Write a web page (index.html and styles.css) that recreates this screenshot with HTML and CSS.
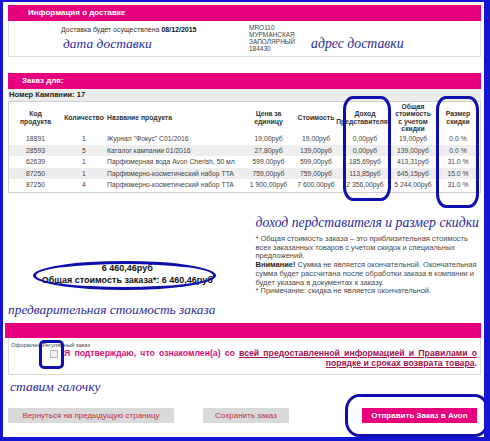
FILE: index.html
```html
<!DOCTYPE html>
<html lang="ru">
<head>
<meta charset="utf-8">
<title>Заказ</title>
<link rel="stylesheet" href="styles.css">
</head>
<body>
<div class="page">
  <div class="bar bar-first">Информация о доставке</div>
  <div class="delivery">
    <div class="del-left">
      <div class="del-date">Доставка будет осуществлена <b>08/12/2015</b></div>
      <div class="note-hand note-date">дата доставки</div>
    </div>
    <div class="del-right">
      <div class="address">MRO110<br>МУРМАНСКАЯ<br>ЗАПОЛЯРНЫЙ<br>184430</div>
      <div class="note-hand note-addr">адрес доставки</div>
    </div>
  </div>

  <div class="bar bar-order">Заказ для:</div>
  <div class="campaign">Номер Кампании: 17</div>
  <div class="table-box">
    <table class="items">
      <colgroup>
        <col class="c1"><col class="c2"><col class="c3"><col class="c4"><col class="c5"><col class="c6"><col class="c7"><col class="c8">
      </colgroup>
      <thead>
        <tr>
          <th>Код<br>продукта</th>
          <th>Количество</th>
          <th class="left">Название продукта</th>
          <th>Цена за<br>единицу</th>
          <th>Стоимость</th>
          <th>Доход<br><span class="overflow">Представителя</span></th>
          <th>Общая<br>стоимость<br>с учетом<br>скидки</th>
          <th>Размер<br>скидки</th>
        </tr>
      </thead>
      <tbody>
        <tr><td>18891</td><td>1</td><td class="left">Журнал "Фокус" C01/2016</td><td>19,00руб</td><td>19,00руб</td><td>0,00руб</td><td>19,00руб</td><td>0.0 %</td></tr>
        <tr class="alt"><td>28593</td><td>5</td><td class="left">Каталог кампании 01/2016</td><td>27,80руб</td><td>139,00руб</td><td>0,00руб</td><td>139,00руб</td><td>0.0 %</td></tr>
        <tr><td>62639</td><td>1</td><td class="left">Парфюмерная вода Avon Cherish, 50 мл</td><td>599,00руб</td><td>599,00руб</td><td>185,69руб</td><td>413,31руб</td><td>31.0 %</td></tr>
        <tr class="alt"><td>87250</td><td>1</td><td class="left">Парфюмерно-косметический набор TTA</td><td>759,00руб</td><td>759,00руб</td><td>113,85руб</td><td>645,15руб</td><td>15.0 %</td></tr>
        <tr><td>87250</td><td>4</td><td class="left">Парфюмерно-косметический набор TTA</td><td>1 900,00руб</td><td>7 600,00руб</td><td>2 356,00руб</td><td>5 244,00руб</td><td>31.0 %</td></tr>
      </tbody>
    </table>
  </div>

  <div class="summary">
    <div class="sum-left">
      <div class="totals">
        <div>6 460,46руб</div>
        <div>Общая стоимость заказа*: 6 460,46руб</div>
      </div>
    </div>
    <div class="sum-right">
      <div class="note-hand note-income">доход пердставителя и размер скидки</div>
      <div class="notes">
        * Общая стоимость заказа – это приблизительная стоимость всех заказанных товаров с учетом скидок и специальных предложений.<br>
        <b>Внимание!</b> Сумма не является окончательной. Окончательная сумма будет рассчитана после обработки заказа в компании и будет указана в документах к заказу.<br>
        * Примечание: скидка не является окончательной.
      </div>
    </div>
  </div>
  <div class="note-hand note-total">предварительная стоимость заказа</div>

  <div class="bar bar-confirm"></div>
  <div class="confirm">
    <div class="regular">Оформлен Регулярный заказ</div>
    <div class="confirm-row">
      <span class="checkbox"></span>
      <p class="agree">Я подтверждаю, что ознакомлен(а) со <a href="#">всей предоставленной информацией и Правилами о порядке и сроках возврата товара</a>.</p>
    </div>
  </div>
  <div class="note-hand note-check">ставим галочку</div>

  <div class="buttons">
    <span class="btn btn-gray btn-back">Вернуться на предыдущую страницу</span>
    <span class="btn btn-gray btn-save">Сохранить заказ</span>
    <span class="btn btn-pink">Отправить Заказ в Avon</span>
  </div>

  <div class="ring ring-income"></div>
  <div class="ring ring-discount"></div>
  <div class="ring ring-total"></div>
  <div class="ring ring-check"></div>
  <div class="ring ring-send"></div>
</div>
</body>
</html>
```

FILE: styles.css
```css
* { box-sizing: border-box; }
html, body { margin: 0; padding: 0; background: #ffffff; }
body { font-family: "Liberation Sans", Arial, sans-serif; color: #333; }

.page {
  position: relative;
  width: 490px;
  height: 441px;
  overflow: hidden;
  border-style: solid;
  border-color: #1414d4;
  border-width: 2px 6px 4px 3px;
  padding: 3px 3px 0 5px;
  background: #fff;
}

.bar {
  background: #e6007e;
  color: #fff;
  font-weight: bold;
  font-size: 8px;
  height: 16px;
  line-height: 16px;
  padding-left: 20px;
}

.delivery {
  display: flex;
  height: 36px;
  border: 1px solid #dcdcdc;
  border-top: none;
}
.del-left { width: 240px; padding: 5px 0 0 52px; }
.del-date { font-size: 7px; color: #333; }
.del-date b { color: #111; }
.del-right { display: flex; padding-top: 3px; }
.address { font-size: 6.5px; line-height: 7px; color: #444; width: 62px; }

.note-hand {
  font-family: "Liberation Serif", "Times New Roman", serif;
  font-style: italic;
  color: #2a2a96;
  font-size: 14px;
  line-height: 16px;
  white-space: nowrap;
}
.note-date { margin: 3px 0 0 2px; font-size: 13.5px; }
.note-addr { margin-top: 12px; font-size: 13.8px; }

.bar-order { margin-top: 16px; padding-left: 14px; }
.campaign {
  font-size: 7.5px;
  font-weight: bold;
  color: #222;
  background: #ececec;
  height: 12px;
  line-height: 12px;
  padding-left: 1px;
}
.table-box {
  border: 1px solid #cfcfcf;
  height: 92px;
}
.items {
  width: 100%;
  border-collapse: collapse;
  table-layout: fixed;
  font-size: 6.8px;
  color: #444;
}
.items col.c1 { width: 53px; }
.items col.c2 { width: 44px; }
.items col.c3 { width: 139px; }
.items col.c4 { width: 47px; }
.items col.c5 { width: 48px; }
.items col.c6 { width: 50px; }
.items col.c7 { width: 46px; }
.items col.c8 { width: 44px; }
.items th {
  font-weight: bold;
  color: #333;
  height: 31px;
  line-height: 7.5px;
  padding: 0;
  text-align: center;
  vertical-align: middle;
  white-space: nowrap;
}
.items td {
  height: 11.5px;
  padding: 0;
  text-align: center;
  white-space: nowrap;
}
.items .left { text-align: left; padding-left: 1px; }
.items tr.alt td { background: #eeeeee; }
.overflow { margin-left: -6px; }

.summary { display: flex; height: 107px; }
.sum-left { width: 246px; padding-top: 69px; }
.totals {
  text-align: center;
  font-size: 9px;
  font-weight: bold;
  color: #111;
  line-height: 12px;
  padding-right: 7px;
}
.sum-right { padding-top: 22px; min-width: 0; }
.note-income { margin-left: 2px; font-size: 13.7px; }
.notes {
  font-size: 7.5px;
  line-height: 8.7px;
  color: #4a4a4a;
  padding: 4px 0 0 2px;
  width: 228px;
}
.notes b { color: #222; }
.note-total { margin-top: 2px; font-size: 13.4px; }

.bar-confirm { margin-top: 5px; margin-left: -3px; height: 15px; }
.confirm {
  border: 1px solid #dcdcdc;
  border-top: none;
  height: 37px;
  padding: 4px 3px 0 2px;
}
.regular { font-size: 5.8px; color: #444; }
.confirm-row { display: flex; align-items: flex-start; }
.checkbox {
  flex: none;
  width: 8px;
  height: 8px;
  border: 1px solid #b8b8b8;
  background: #f2f2f2;
  margin: 2px 0 0 39px;
}
.agree {
  flex: 1;
  margin: 0 0 0 6px;
  font-size: 8.7px;
  font-weight: bold;
  color: #d4107a;
  line-height: 10px;
  text-align: justify;
  text-align-last: right;
}
.agree a { color: #a0144f; text-decoration: underline; }

.note-check { margin: 4px 0 0 2px; font-size: 13.5px; }

.buttons { display: flex; align-items: center; margin-top: 13px; }
.btn { font-size: 8px; height: 15px; line-height: 15px; text-align: center; }
.btn-gray { background: #d9d9d9; color: #c0303c; }
.btn-back { width: 166px; }
.btn-save { width: 86px; margin-left: 29px; }
.btn-pink {
  background: #e6007e;
  color: #fff;
  font-weight: bold;
  width: 115px;
  margin-left: 73px;
}

.ring {
  position: absolute;
  border: 3px solid #0f0fae;
}
.ring-income { left: 340px; top: 94px; width: 48px; height: 105px; border-radius: 10px / 14px; }
.ring-discount { left: 433px; top: 94px; width: 43px; height: 112px; border-radius: 10px / 14px; }
.ring-total { left: 30px; top: 259px; width: 183px; height: 29px; border-radius: 50% / 50%; }
.ring-check { left: 36px; top: 338px; width: 25px; height: 29px; border-radius: 5px; }
.ring-send { left: 342px; top: 392px; width: 144px; height: 43px; border-radius: 14px / 16px; }
```
